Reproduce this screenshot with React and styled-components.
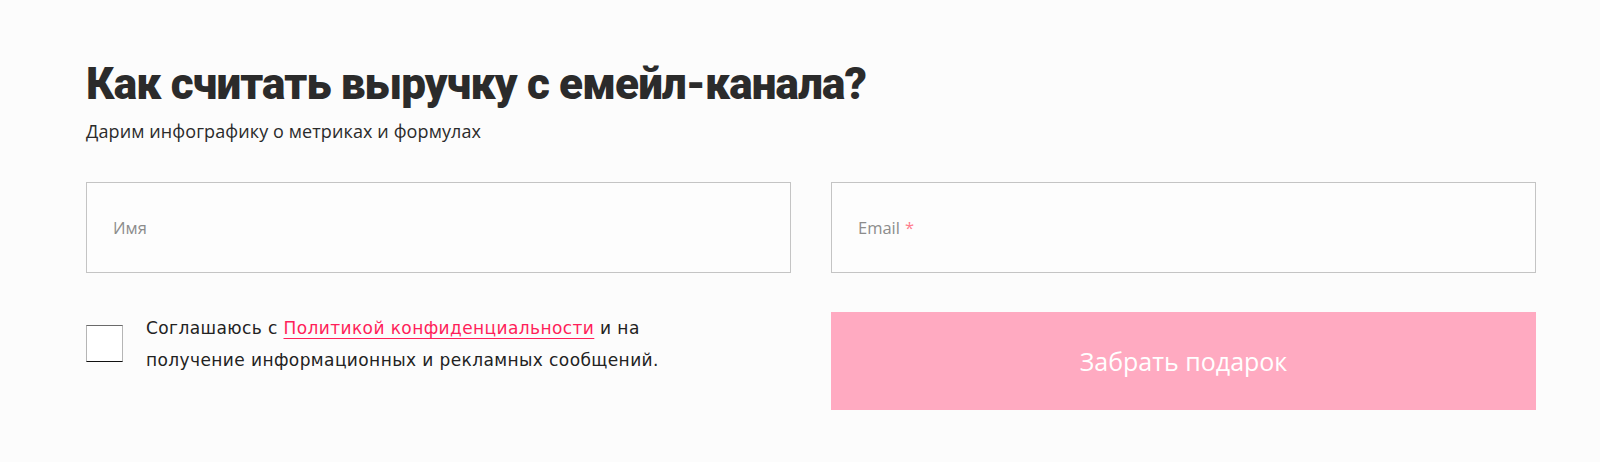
import styled, { createGlobalStyle } from "styled-components";

const GlobalStyle = createGlobalStyle`
  html, body {
    margin: 0;
    padding: 0;
    background: #fcfcfc;
  }
  body {
    font-family: "Open Sans", "Noto Sans", sans-serif;
    color: #2b2b2b;
  }
`;

const Section = styled.section`
  width: 1450px;
  padding: 58px 0 53px 86px;
`;

const Title = styled.h2`
  margin: 0;
  font-family: "Roboto", "Noto Sans", sans-serif;
  font-weight: 900;
  font-size: 44px;
  line-height: 52px;
  letter-spacing: -0.85px;
  color: #2b2b2b;
`;

const Subtitle = styled.p`
  margin: 9px 0 0;
  font-size: 18px;
  line-height: 24px;
  letter-spacing: 0.1px;
  color: #2b2b2b;
`;

const Grid = styled.form`
  display: grid;
  grid-template-columns: 705px 705px;
  column-gap: 40px;
  row-gap: 39px;
  margin-top: 39px;
`;

const Field = styled.label`
  display: flex;
  align-items: center;
  height: 91px;
  box-sizing: border-box;
  padding: 0 26px;
  border: 1px solid #c4c4c4;
  background: #fdfdfd;
  font-size: 16.5px;
  color: #8c8c8c;
`;

const Star = styled.span`
  color: #ff7e8e;
  margin-left: 5px;
`;

const Agree = styled.div`
  display: flex;
  align-items: flex-start;
  gap: 23px;
`;

const Box = styled.span`
  flex: none;
  width: 37px;
  height: 37px;
  box-sizing: border-box;
  margin-top: 13px;
  background: #fff;
  border-top: 1px solid #6a6a6a;
  border-left: 1px solid #b5b5b5;
  border-right: 1px solid #b5b5b5;
  border-bottom: 1px solid #111;
`;

const AgreeText = styled.p`
  margin: 0;
  font-family: "DejaVu Sans", "Noto Sans", sans-serif;
  font-size: 17px;
  line-height: 32px;
  letter-spacing: 0.4px;
  color: #222;
`;

const Link = styled.a`
  color: #ff1f5a;
  text-decoration: underline;
  text-underline-offset: 4px;
  text-decoration-thickness: 1px;
`;

const Submit = styled.button`
  height: 98px;
  border: none;
  background: #ffaac1;
  color: #fff;
  font-family: "Open Sans", "Noto Sans", sans-serif;
  font-size: 25px;
  cursor: pointer;
`;

export default function App() {
  return (
    <>
      <GlobalStyle />
      <Section>
        <Title>Как считать выручку с емейл-канала?</Title>
        <Subtitle>Дарим инфографику о метриках и формулах</Subtitle>
        <Grid>
          <Field>Имя</Field>
          <Field>
            Email<Star>*</Star>
          </Field>
          <Agree>
            <Box />
            <AgreeText>
              Соглашаюсь с <Link href="#">Политикой конфиденциальности</Link> и на
              <br />
              получение информационных и рекламных сообщений.
            </AgreeText>
          </Agree>
          <Submit type="button">Забрать подарок</Submit>
        </Grid>
      </Section>
    </>
  );
}
